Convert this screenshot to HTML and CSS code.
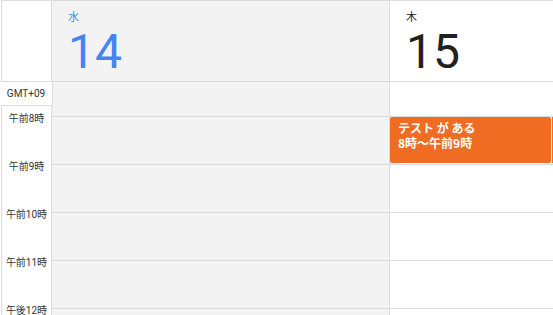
FILE: index.html
```html
<!DOCTYPE html>
<html lang="ja">
<head>
<meta charset="utf-8">
<link rel="stylesheet" href="styles.css">
</head>
<body>
<div class="cal">
  <div class="col gutter">
    <div class="cell head"></div>
    <div class="cell allday"><div class="tz">GMT+09</div></div>
    <div class="cell hour"><span class="label">午前8時</span></div>
    <div class="cell hour"><span class="label">午前9時</span></div>
    <div class="cell hour"><span class="label">午前10時</span></div>
    <div class="cell hour"><span class="label">午前11時</span></div>
    <div class="cell hour"><span class="label">午後12時</span></div>
  </div>
  <div class="col day past">
    <div class="cell head">
      <div class="dow today">水</div>
      <div class="num today">14</div>
    </div>
    <div class="cell allday"></div>
    <div class="cell hour"></div>
    <div class="cell hour"></div>
    <div class="cell hour"></div>
    <div class="cell hour"></div>
    <div class="cell hour"></div>
  </div>
  <div class="col day last">
    <div class="cell head">
      <div class="dow">木</div>
      <div class="num">15</div>
    </div>
    <div class="cell allday"></div>
    <div class="cell hour">
      <div class="event">
        <div class="ev-title">テスト が ある</div>
        <div class="ev-time">8時〜午前9時</div>
      </div>
      <div class="event-sliver"></div>
    </div>
    <div class="cell hour"></div>
    <div class="cell hour"></div>
    <div class="cell hour"></div>
    <div class="cell hour"></div>
  </div>
</div>
</body>
</html>
```
FILE: styles.css
```css
html, body {
  margin: 0;
  padding: 0;
  background: #ffffff;
  overflow: hidden;
}
body {
  font-family: Roboto, "Noto Sans CJK JP", sans-serif;
  color: #212121;
}
.cal {
  display: flex;
  margin-left: 1px;
  border-top: 1px solid #dcdcdc;
  height: 314px;
  overflow: hidden;
}
.col {
  display: flex;
  flex-direction: column;
  box-sizing: border-box;
}
.gutter {
  width: 51px;
  border-left: 1px solid #dcdcdc;
  border-right: 1px solid #dcdcdc;
  flex: none;
}
.day.past {
  width: 338px;
  flex: none;
  background: #f3f3f3;
  border-right: 1px solid #dcdcdc;
}
.day.last {
  flex: 1;
  background: #ffffff;
}
.cell {
  box-sizing: border-box;
  flex: none;
}
.head {
  height: 81px;
  border-bottom: 1px solid #dcdcdc;
  padding: 10px 0 0 16px;
}
.gutter .head {
  padding: 0;
}
.allday {
  height: 35px;
  border-bottom: 1px solid #dcdcdc;
}
.gutter .allday {
  border-bottom: none;
}
.hour {
  height: 48px;
  border-bottom: 1px solid #dcdcdc;
  position: relative;
}
.gutter .hour {
  border-bottom: none;
  text-align: center;
}
.tz {
  position: relative;
  z-index: 1;
  box-sizing: border-box;
  height: 24px;
  margin: 0 -2px 0 -2px;
  background: #ffffff;
  border-right: 1px solid #dcdcdc;
  border-bottom: 1px solid #dcdcdc;
  font-size: 10px;
  line-height: 23px;
  text-align: center;
  color: #333333;
}
.label {
  display: block;
  margin-top: -4px;
  font-size: 10px;
  line-height: 12px;
  color: #333333;
  white-space: nowrap;
}
.dow {
  font-size: 11px;
  line-height: 14px;
  height: 14px;
  color: #212121;
}
.num {
  margin-top: 3px;
  font-size: 48px;
  line-height: 48px;
  font-weight: 400;
  color: #212121;
}
.today {
  color: #4285f4;
}
.event {
  position: absolute;
  top: 0;
  left: 0;
  width: 161px;
  height: 46px;
  box-sizing: border-box;
  background: #ef6c22;
  border-radius: 2px;
  padding: 3px 0 0 8px;
  color: #ffffff;
  font-family: "Noto Sans CJK JP", Roboto, sans-serif;
  font-size: 12px;
  line-height: 15px;
  font-weight: 700;
  white-space: nowrap;
  overflow: hidden;
}
.event-sliver {
  position: absolute;
  top: 0;
  left: 162px;
  width: 1px;
  height: 46px;
  background: #ef6c22;
}
```
